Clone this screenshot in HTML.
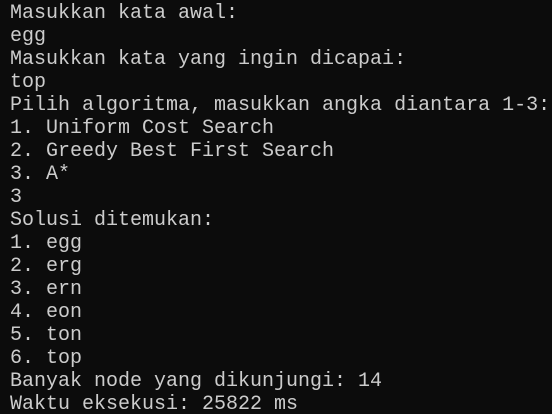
<!DOCTYPE html>
<html><head><style>
html,body{margin:0;padding:0;background:#0c0c0c;width:552px;height:414px;overflow:hidden}
pre{margin:0;padding:2px 0 0 10px;font-family:"Liberation Mono",monospace;font-size:20px;line-height:23px;color:#cccccc;white-space:pre}
</style></head><body><pre>Masukkan kata awal:
egg
Masukkan kata yang ingin dicapai:
top
Pilih algoritma, masukkan angka diantara 1-3:
1. Uniform Cost Search
2. Greedy Best First Search
3. A*
3
Solusi ditemukan:
1. egg
2. erg
3. ern
4. eon
5. ton
6. top
Banyak node yang dikunjungi: 14
Waktu eksekusi: 25822 ms</pre></body></html>
